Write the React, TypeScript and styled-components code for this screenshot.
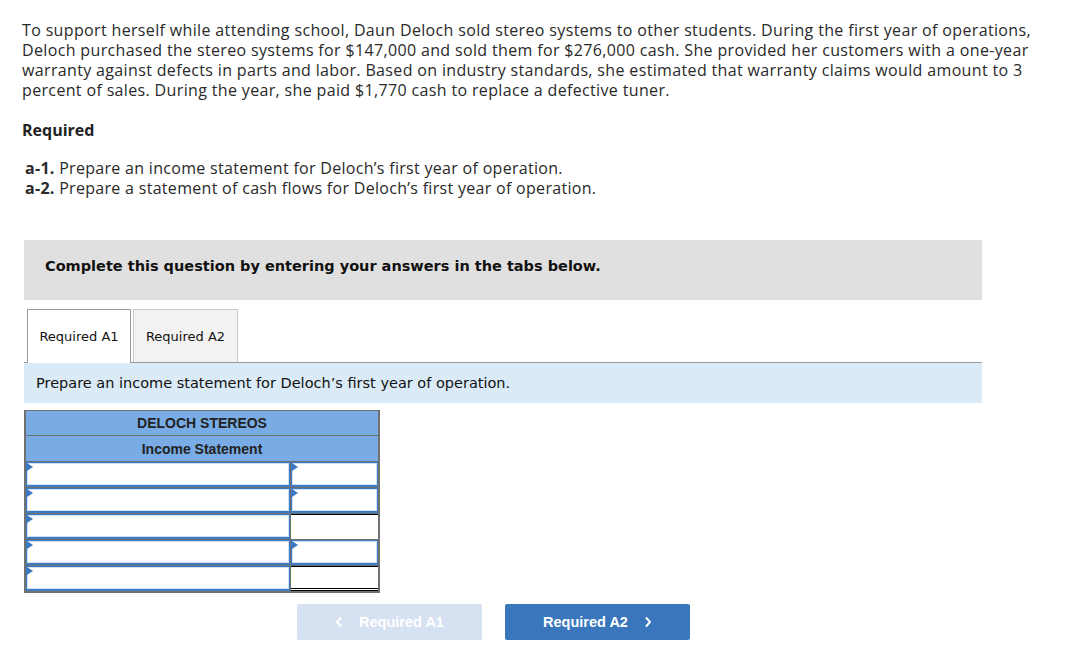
import React from "react";
import styled, { createGlobalStyle } from "styled-components";

const Global = createGlobalStyle`
  html, body { margin: 0; padding: 0; background: #fff; }
  body { font-family: "Open Sans", "Liberation Sans", Arial, sans-serif; color: #222; }
`;

const Page = styled.div`
  width: 1078px;
  padding: 20px 0 0 22px;
  box-sizing: border-box;
`;

const Intro = styled.p`
  margin: 0;
  width: 1030px;
  font-size: 16px;
  line-height: 20px;
  letter-spacing: 0.35px;
  color: #2a2a2a;
`;

const RequiredTitle = styled.div`
  margin-top: 20px;
  font-size: 16px;
  font-weight: bold;
  line-height: 20px;
  color: #222;
`;

const ReqList = styled.div`
  margin-top: 18px;
  padding-left: 3px;
  font-size: 16px;
  line-height: 20px;
  letter-spacing: 0.3px;
  color: #2a2a2a;
  b { font-weight: bold; }
`;

const Panel = styled.div`
  margin-top: 42px;
  margin-left: 2px;
  width: 958px;
  font-family: "DejaVu Sans", Verdana, sans-serif;
`;

const Banner = styled.div`
  height: 60px;
  box-sizing: border-box;
  background: #e0e0e0;
  display: flex;
  align-items: center;
  padding: 0 0 9px 21px;
  font-size: 14.5px;
  font-weight: bold;
  color: #111;
`;

const TabRow = styled.div`
  display: flex;
  gap: 2px;
  margin-top: 9px;
  padding-left: 3px;
  border-bottom: 1px solid #999;
`;

const Tab = styled.div<{ $active?: boolean }>`
  width: ${(p) => (p.$active ? 104 : 105)}px;
  box-sizing: border-box;
  display: flex;
  align-items: center;
  justify-content: center;
  font-size: 13px;
  color: #111;
  background: ${(p) => (p.$active ? "#fff" : "#f2f2f2")};
  border: 1px solid ${(p) => (p.$active ? "#999" : "#c8c8c8")};
  border-bottom: none;
  margin-bottom: ${(p) => (p.$active ? "-1px" : "0")};
  height: ${(p) => (p.$active ? "54px" : "53px")};
`;

const Instruction = styled.div`
  height: 40px;
  background: #daeaf7;
  display: flex;
  align-items: center;
  padding-left: 12px;
  font-size: 14.5px;
  color: #111;
`;

const Table = styled.div`
  margin-top: 7px;
  width: 356px;
  border: 1px solid #707070;
  border-left-width: 2px;
  border-right-width: 2px;
  border-bottom-width: 2px;
  box-sizing: border-box;
  font-family: "Liberation Sans", Arial, sans-serif;
`;

const HeadRow = styled.div`
  height: 24px;
  background: #79ace4;
  display: flex;
  align-items: center;
  justify-content: center;
  font-size: 14px;
  font-weight: bold;
  color: #222;
  & + & { border-top: 1px solid #707070; height: 25px; }
`;

const Row = styled.div`
  display: grid;
  grid-template-columns: 264px 1fr;
  height: 26px;
  box-sizing: border-box;
  border-top: 1px solid #6e6e6e;
  background: #6e6e6e;
  column-gap: 1px;
`;

const Cell = styled.div<{ $line?: "single" | "double" }>`
  position: relative;
  background: #fff;
  box-sizing: border-box;
  border-top: ${(p) => (p.$line ? "1px solid #000" : "none")};
  border-bottom: ${(p) => (p.$line === "double" ? "3px double #000" : "none")};
`;

const InputBox = styled.div`
  position: relative;
  height: 100%;
  box-sizing: border-box;
  border: 1px solid #3d7bc4;
  border-bottom-width: 2px;
  box-shadow: inset 0 0 0 1px #cfe0f4;
  background: #fff;
  &::before {
    content: "";
    position: absolute;
    left: 0;
    top: 0;
    border-left: 6px solid #3a78c4;
    border-top: 4px solid transparent;
    border-bottom: 4px solid transparent;
  }
`;

const Nav = styled.div`
  display: flex;
  gap: 23px;
  margin-top: 11px;
  padding-left: 273px;
`;

const NavButton = styled.div<{ $disabled?: boolean }>`
  width: 185px;
  height: 36px;
  border-radius: 2px;
  display: flex;
  align-items: center;
  justify-content: center;
  gap: 16px;
  font-family: "Liberation Sans", Arial, sans-serif;
  font-size: 14.5px;
  font-weight: bold;
  color: #fff;
  background: ${(p) => (p.$disabled ? "#d6e2f1" : "#3a76bc")};
`;

const Chevron = ({ dir }: { dir: "left" | "right" }) => (
  <svg width="8" height="12" viewBox="0 0 8 12">
    <path
      d={dir === "left" ? "M6 1.5 L2 6 L6 10.5" : "M2 1.5 L6 6 L2 10.5"}
      fill="none"
      stroke="#fff"
      strokeWidth="2"
    />
  </svg>
);

const rows: { right: "input" | "single" | "double" }[] = [
  { right: "input" },
  { right: "input" },
  { right: "single" },
  { right: "input" },
  { right: "double" },
];

export default function App() {
  return (
    <>
      <Global />
      <Page>
        <Intro>
          To support herself while attending school, Daun Deloch sold stereo systems to other students. During the first year of operations, Deloch purchased the stereo systems for $147,000 and sold them for $276,000 cash. She provided her customers with a one-year warranty against defects in parts and labor. Based on industry standards, she estimated that warranty claims would amount to 3 percent of sales. During the year, she paid $1,770 cash to replace a defective tuner.
        </Intro>
        <RequiredTitle>Required</RequiredTitle>
        <ReqList>
          <div>
            <b>a-1.</b> Prepare an income statement for Deloch’s first year of operation.
          </div>
          <div>
            <b>a-2.</b> Prepare a statement of cash flows for Deloch’s first year of operation.
          </div>
        </ReqList>
        <Panel>
          <Banner>Complete this question by entering your answers in the tabs below.</Banner>
          <TabRow>
            <Tab $active>Required A1</Tab>
            <Tab>Required A2</Tab>
          </TabRow>
          <Instruction>Prepare an income statement for Deloch’s first year of operation.</Instruction>
          <Table>
            <HeadRow>DELOCH STEREOS</HeadRow>
            <HeadRow>Income Statement</HeadRow>
            {rows.map((r, i) => (
              <Row key={i}>
                <Cell>
                  <InputBox />
                </Cell>
                {r.right === "input" ? (
                  <Cell>
                    <InputBox />
                  </Cell>
                ) : (
                  <Cell $line={r.right} />
                )}
              </Row>
            ))}
          </Table>
          <Nav>
            <NavButton $disabled>
              <Chevron dir="left" />
              Required A1
            </NavButton>
            <NavButton>
              Required A2
              <Chevron dir="right" />
            </NavButton>
          </Nav>
        </Panel>
      </Page>
    </>
  );
}
